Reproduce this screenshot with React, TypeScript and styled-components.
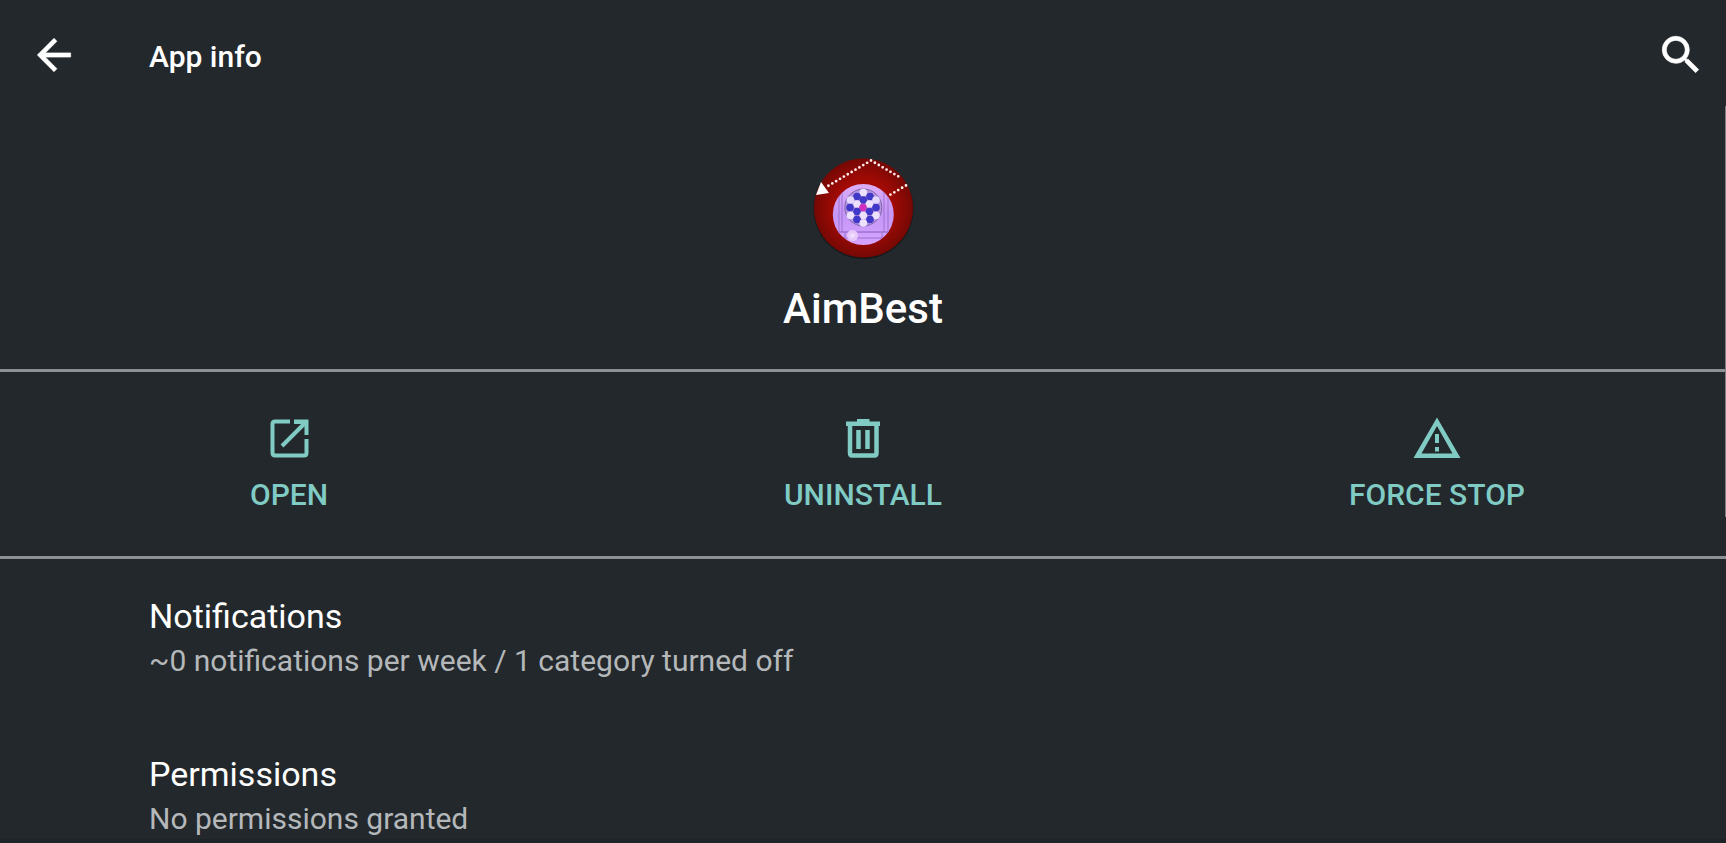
import React from "react";
import styled, { createGlobalStyle } from "styled-components";

const GlobalStyle = createGlobalStyle`
  * { box-sizing: border-box; }
  body {
    margin: 0;
    background: #23282c;
    color: #ffffff;
    font-family: Roboto, "Liberation Sans", sans-serif;
    overflow: hidden;
  }
`;

const Page = styled.div`
  position: relative;
  height: 100vh;
  overflow: hidden;
  border-bottom: 4px solid #1f2428;
`;

const Toolbar = styled.header`
  display: flex;
  align-items: center;
  height: 106px;
  padding: 4px 20px 0 29px;
`;

const IconButton = styled.button`
  display: flex;
  padding: 0;
  border: 0;
  background: none;
  color: inherit;
  cursor: pointer;
`;

const ToolbarTitle = styled.h1`
  flex: 1;
  margin: 0;
  padding: 4px 0 0 70px;
  font-size: 30px;
  line-height: 36px;
  font-weight: 500;
`;

const AppHeader = styled.section`
  display: flex;
  flex-direction: column;
  align-items: center;
  height: 266px;
  padding-top: 50px;
  border-bottom: 3px solid #8b9194;
`;

const AppName = styled.h2`
  margin: 25px 0 0;
  font-size: 42px;
  line-height: 48px;
  font-weight: 500;
`;

const Actions = styled.div`
  display: grid;
  grid-template-columns: repeat(3, 1fr);
  height: 187px;
  padding: 0 2px;
  border-bottom: 3px solid #8b9194;
`;

const ActionButton = styled.button`
  display: flex;
  flex-direction: column;
  align-items: center;
  gap: 12px;
  padding: 39px 0 0;
  border: 0;
  background: none;
  color: #80cbc4;
  font: 500 30px/36px Roboto, "Liberation Sans", sans-serif;
  cursor: pointer;
`;

const Preferences = styled.ul`
  margin: 0;
  padding: 0;
  list-style: none;
`;

const Preference = styled.li`
  height: 158px;
  padding: 36px 149px 0;
`;

const PreferenceTitle = styled.div`
  font-size: 34px;
  line-height: 42px;
`;

const PreferenceSummary = styled.div`
  font-size: 30px;
  line-height: 48px;
  color: #b5b8ba;
`;

const ScrollThumb = styled.div`
  position: absolute;
  top: 106px;
  right: 0;
  width: 1px;
  height: 411px;
  background: #7b8083;
`;

const BackIcon = () => (
  <svg width="50" height="50" viewBox="0 0 24 24" fill="currentColor" stroke="currentColor" strokeWidth="0.3" aria-hidden="true">
    <path d="M20 11H7.83l5.59-5.59L12 4l-8 8 8 8 1.41-1.41L7.83 13H20v-2z" />
  </svg>
);

const SearchIcon = () => (
  <svg width="50" height="50" viewBox="0 0 24 24" fill="currentColor" stroke="currentColor" strokeWidth="0.3" aria-hidden="true">
    <path d="M15.5 14h-.79l-.28-.27A6.471 6.471 0 0 0 16 9.5 6.5 6.5 0 1 0 9.5 16c1.61 0 3.09-.59 4.23-1.57l.27.28v.79l5 4.99L20.49 19l-4.99-5zm-6 0C7.01 14 5 11.99 5 9.5S7.01 5 9.5 5 14 7.01 14 9.5 11.99 14 9.5 14z" />
  </svg>
);

const OpenIcon = () => (
  <svg width="54" height="54" viewBox="0 0 54 54" fill="none" stroke="currentColor" aria-hidden="true">
    <path d="M28 10.500H13Q10.500 10.500 10.500 13V41.500Q10.500 44.500 13 44.500H42Q44.500 44.500 44.500 42V28" strokeWidth="4" />
    <path d="M20 35L44 11" strokeWidth="4" />
    <path d="M32 8.500H46.500V24H42.500V13H32Z" fill="currentColor" stroke="none" />
  </svg>
);

const TrashIcon = () => (
  <svg width="54" height="54" viewBox="0 0 54 54" fill="none" stroke="currentColor" aria-hidden="true">
    <path d="M14 13V42Q14 44.500 16 44.500H38.500Q40.500 44.500 40.500 42V13" strokeWidth="4.500" />
    <path d="M10 10.500H21V8H33.500V10.500H44V15H10Z" fill="currentColor" stroke="none" />
    <path d="M22.500 19V38M31.500 19V38" strokeWidth="4.500" />
  </svg>
);

const WarningIcon = () => (
  <svg width="54" height="54" viewBox="0 0 54 54" fill="currentColor" aria-hidden="true">
    <path fillRule="evenodd" d="M27 6.500L50.500 47H3.500ZM27 15L11.500 42.500H42.500Z" />
    <path d="M25 23h4v9h-4zM25 36h4v4.500h-4z" />
  </svg>
);

const balls: [number, number, string][] = [
  [63.3, 47.5, "#ece2ff"],
  [57, 51.5, "#4038c8"],
  [70, 51.5, "#4038c8"],
  [50.5, 55, "#e4d8ff"],
  [63.3, 55, "#4038c8"],
  [76, 55, "#e4d8ff"],
  [57, 59, "#ece2ff"],
  [69.5, 59, "#ece2ff"],
  [50, 62.5, "#4038c8"],
  [63, 62.5, "#d030c0"],
  [76, 62.5, "#4038c8"],
  [57, 66.5, "#4038c8"],
  [69.5, 66.5, "#4038c8"],
  [50.5, 70.5, "#ece2ff"],
  [63.3, 70.5, "#ece2ff"],
  [76, 70.5, "#ece2ff"],
  [57, 74.5, "#4038c8"],
  [70, 74.5, "#4038c8"],
  [63.3, 78, "#ece2ff"],
];

const AppIcon = () => (
  <svg width="104" height="104" viewBox="11 11 104 104" role="img" aria-label="AimBest icon">
    <defs>
      <radialGradient id="disc">
        <stop offset="0" stopColor="#b40a04" />
        <stop offset="0.6" stopColor="#a00a05" />
        <stop offset="1" stopColor="#750804" />
      </radialGradient>
      <linearGradient id="board" x1="0" y1="0" x2="0" y2="1">
        <stop offset="0" stopColor="#dcaef8" />
        <stop offset="0.5" stopColor="#c596f6" />
        <stop offset="1" stopColor="#d6a4ff" />
      </linearGradient>
      <clipPath id="boardClip">
        <circle cx="63.3" cy="69.5" r="30.5" />
      </clipPath>
    </defs>
    <circle cx="63.5" cy="64" r="50" fill="#15191b" />
    <circle cx="63.5" cy="63" r="49.5" fill="url(#disc)" />
    <circle cx="63.3" cy="69.5" r="30.5" fill="url(#board)" />
    <g clipPath="url(#boardClip)" fill="none" stroke="#9c72d2" strokeWidth="1">
      <path d="M39 40V87H88V40M42 40V87M84 40V87M32 87H95M32 93H95M45 87V93M82 87V93" />
    </g>
    <circle cx="63.3" cy="62.5" r="18.5" fill="#b693dd" stroke="#8066b0" strokeWidth="1" />
    {balls.map(([x, y, color]) => (
      <circle key={`${x}-${y}`} cx={x} cy={y} r="3.8" fill={color} />
    ))}
    <circle cx="52.5" cy="90.5" r="5.5" fill="#e6c8fb" />
    <circle cx="52.5" cy="90.5" r="2.5" fill="#f1dcff" />
    <path
      d="M71 15.5L28 41M71 15.5L102 33.5M106 40.500L88 51"
      fill="none"
      stroke="#ffe9e9"
      strokeWidth="2.8"
      strokeLinecap="round"
      strokeDasharray="0 4.5"
    />
    <path d="M21 37L29 48L16 50Z" fill="#ffffff" />
  </svg>
);

const actions = [
  { label: "OPEN", Icon: OpenIcon },
  { label: "UNINSTALL", Icon: TrashIcon },
  { label: "FORCE STOP", Icon: WarningIcon },
];

const preferences = [
  { title: "Notifications", summary: "~0 notifications per week / 1 category turned off" },
  { title: "Permissions", summary: "No permissions granted" },
];

export default function App() {
  return (
    <Page>
      <GlobalStyle />
      <Toolbar>
        <IconButton aria-label="Back">
          <BackIcon />
        </IconButton>
        <ToolbarTitle>App info</ToolbarTitle>
        <IconButton aria-label="Search">
          <SearchIcon />
        </IconButton>
      </Toolbar>
      <main>
        <AppHeader>
          <AppIcon />
          <AppName>AimBest</AppName>
        </AppHeader>
        <Actions>
          {actions.map(({ label, Icon }) => (
            <ActionButton key={label}>
              <Icon />
              {label}
            </ActionButton>
          ))}
        </Actions>
        <Preferences>
          {preferences.map(({ title, summary }) => (
            <Preference key={title}>
              <PreferenceTitle>{title}</PreferenceTitle>
              <PreferenceSummary>{summary}</PreferenceSummary>
            </Preference>
          ))}
        </Preferences>
      </main>
      <ScrollThumb />
    </Page>
  );
}
